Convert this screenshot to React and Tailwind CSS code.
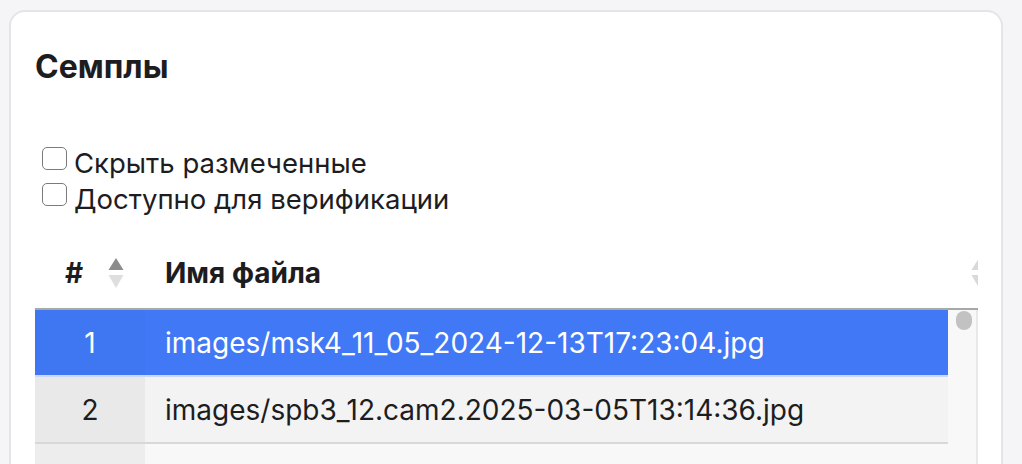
import { useState } from 'react'

const rows = [
  { id: 1, name: 'images/msk4_11_05_2024-12-13T17:23:04.jpg' },
  { id: 2, name: 'images/spb3_12.cam2.2025-03-05T13:14:36.jpg' },
  { id: 3, name: '' },
]

function Check({ label }) {
  const [on, setOn] = useState(false)
  return (
    <label className="flex h-[36px] cursor-pointer items-center gap-[7px]" onClick={() => setOn(!on)}>
      <span
        className={
          'mt-[-9px] block h-[23px] w-[25px] rounded-[5px] border border-[#7b7b7b] ' +
          (on ? 'bg-[#4078f6]' : 'bg-white')
        }
      />
      <span className="text-[27.5px] leading-[36px] text-[#1d1d1f]">{label}</span>
    </label>
  )
}

function SortIcon({ up = '#8c8c8c', down = '#dedede' }) {
  return (
    <svg width="16" height="30" viewBox="0 0 16 30">
      <path d="M8 0 L15.5 12 L0.5 12 Z" fill={up} />
      <path d="M8 30 L15.5 17 L0.5 17 Z" fill={down} />
    </svg>
  )
}

export default function App() {
  const [selected, setSelected] = useState(1)

  return (
    <div className="min-h-[464px] overflow-hidden bg-[#f5f5f7] pt-[10px] font-['Inter',sans-serif]">
      <div className="ml-[9px] mr-[19px] h-[470px] rounded-t-[16px] border-2 border-[#e4e4ea] bg-white pl-[24px] pr-[23px] pt-[35px]">
        <h2 className="text-[32px] font-bold leading-[40px] text-[#1d1d1f]">Семплы</h2>

        <div className="mt-[58px] ml-[7px]">
          <Check label="Скрыть размеченные" />
          <Check label="Доступно для верификации" />
        </div>

        <div className="overflow-hidden">
          <div className="flex h-[93px] w-[952px] items-end border-b-2 border-[#a8a8a8] pb-[17px]">
            <div className="flex w-[110px] items-center gap-[25px] pl-[30px]">
              <span className="text-[28px] font-bold leading-[36px] text-[#1d1d1f]">#</span>
              <SortIcon />
            </div>
            <div className="flex flex-1 items-center justify-between pl-[20px]">
              <span className="text-[28px] font-bold leading-[36px] text-[#1d1d1f]">Имя файла</span>
              <SortIcon up="#d9d9d9" down="#d9d9d9" />
            </div>
          </div>

          <div className="flex">
            <div className="w-[913px]">
              {rows.map((r, i) => {
                const active = r.id === selected
                return (
                  <div
                    key={r.id}
                    onClick={() => setSelected(r.id)}
                    className={
                      'flex h-[67px] cursor-pointer items-center border-b-2 text-[28px] leading-[36px] ' +
                      (active
                        ? 'border-[#c9d8fb] bg-[#4078f6] text-white'
                        : i % 2 === 1
                          ? 'border-[#d8d8d8] bg-[#f3f3f3] text-[#1d1d1f]'
                          : 'border-[#d8d8d8] bg-[#f8f8f8] text-[#1d1d1f]')
                    }
                  >
                    <div
                      className={
                        'flex h-full w-[110px] items-center justify-center ' +
                        (active ? 'bg-[#3f77f3]' : i % 2 === 1 ? 'bg-[#e9e9e9]' : 'bg-[#ededed]')
                      }
                    >
                      {r.name ? r.id : ''}
                    </div>
                    <div className="pl-[20px]">{r.name}</div>
                  </div>
                )
              })}
            </div>
            <div className="w-[30px] border-r-2 border-[#e8e8e8] bg-[#f8f8f8] pl-[8px] pt-[1px]">
              <div className="h-[19px] w-[16px] rounded-full bg-[#c2c2c2]" />
            </div>
          </div>
        </div>
      </div>
    </div>
  )
}
